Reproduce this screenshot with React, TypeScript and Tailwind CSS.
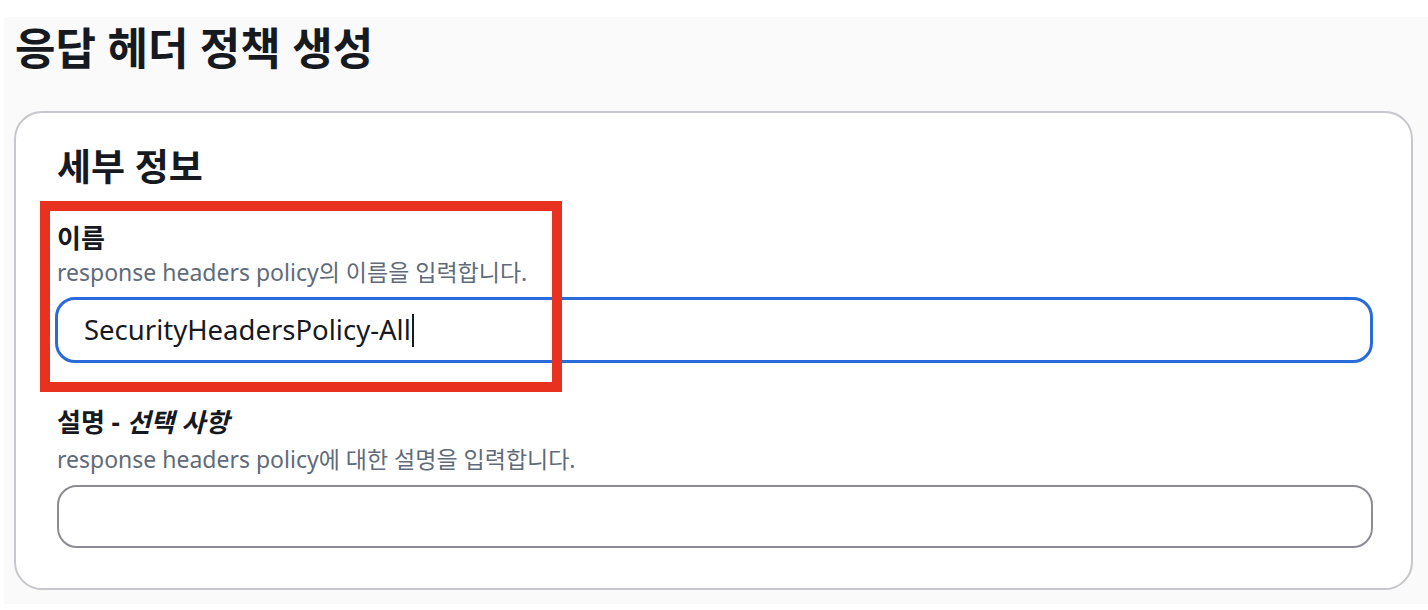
export default function App() {
  const font = { fontFamily: '"Noto Sans", "Noto Sans CJK KR", sans-serif' };
  return (
    <div className="h-[610px] bg-white pt-[17px] pl-[4px] pb-[6px]" style={font}>
      <div className="h-full bg-[#fafafa] pt-[3px]">
        {/* Title */}
        <h1 className="pl-[11px] text-[44px] leading-[56px] font-bold text-[#16191f]">
          응답 헤더 정책 생성
        </h1>

        {/* Card */}
        <div className="ml-[10px] mr-[15px] mt-[35px] h-[479px] rounded-[28px] border-2 border-[#c6c6cd] bg-white pl-[41px] pr-[38px] pt-[30px]">
          <h2 className="text-[37px] leading-[48px] font-bold text-[#16191f]">세부 정보</h2>

          {/* Name field */}
          <div className="relative mt-[10px]">
            <div className="pointer-events-none absolute left-[-17px] top-0 h-[191px] w-[522px] border-[10px] border-[#e8321f]" />
            <div className="pt-[20px] text-[26px] leading-[35px] font-bold text-[#16191f]">이름</div>
            <div className="text-[23px] leading-[32px] text-[#5f6b7a]">
              response headers policy의 이름을 입력합니다.
            </div>
            <div className="mt-[9px] ml-[-2px] flex h-[66px] items-center rounded-[20px] border-[3px] border-[#2a6bdc] pl-[26px]">
              <span className="text-[27.5px] text-[#16191f]">SecurityHeadersPolicy-All</span>
              <span className="ml-[1px] h-[33px] w-[2px] bg-[#16191f]" />
            </div>
          </div>

          {/* Description field */}
          <div className="mt-[42px]">
            <div className="text-[26px] leading-[34px] font-bold text-[#16191f]">
              설명 - <i>선택 사항</i>
            </div>
            <div className="mt-[4px] text-[23px] leading-[32px] text-[#5f6b7a]">
              response headers policy에 대한 설명을 입력합니다.
            </div>
            <div className="mt-[10px] h-[63px] rounded-[20px] border-2 border-[#8c8c94]" />
          </div>
        </div>
      </div>
    </div>
  );
}
